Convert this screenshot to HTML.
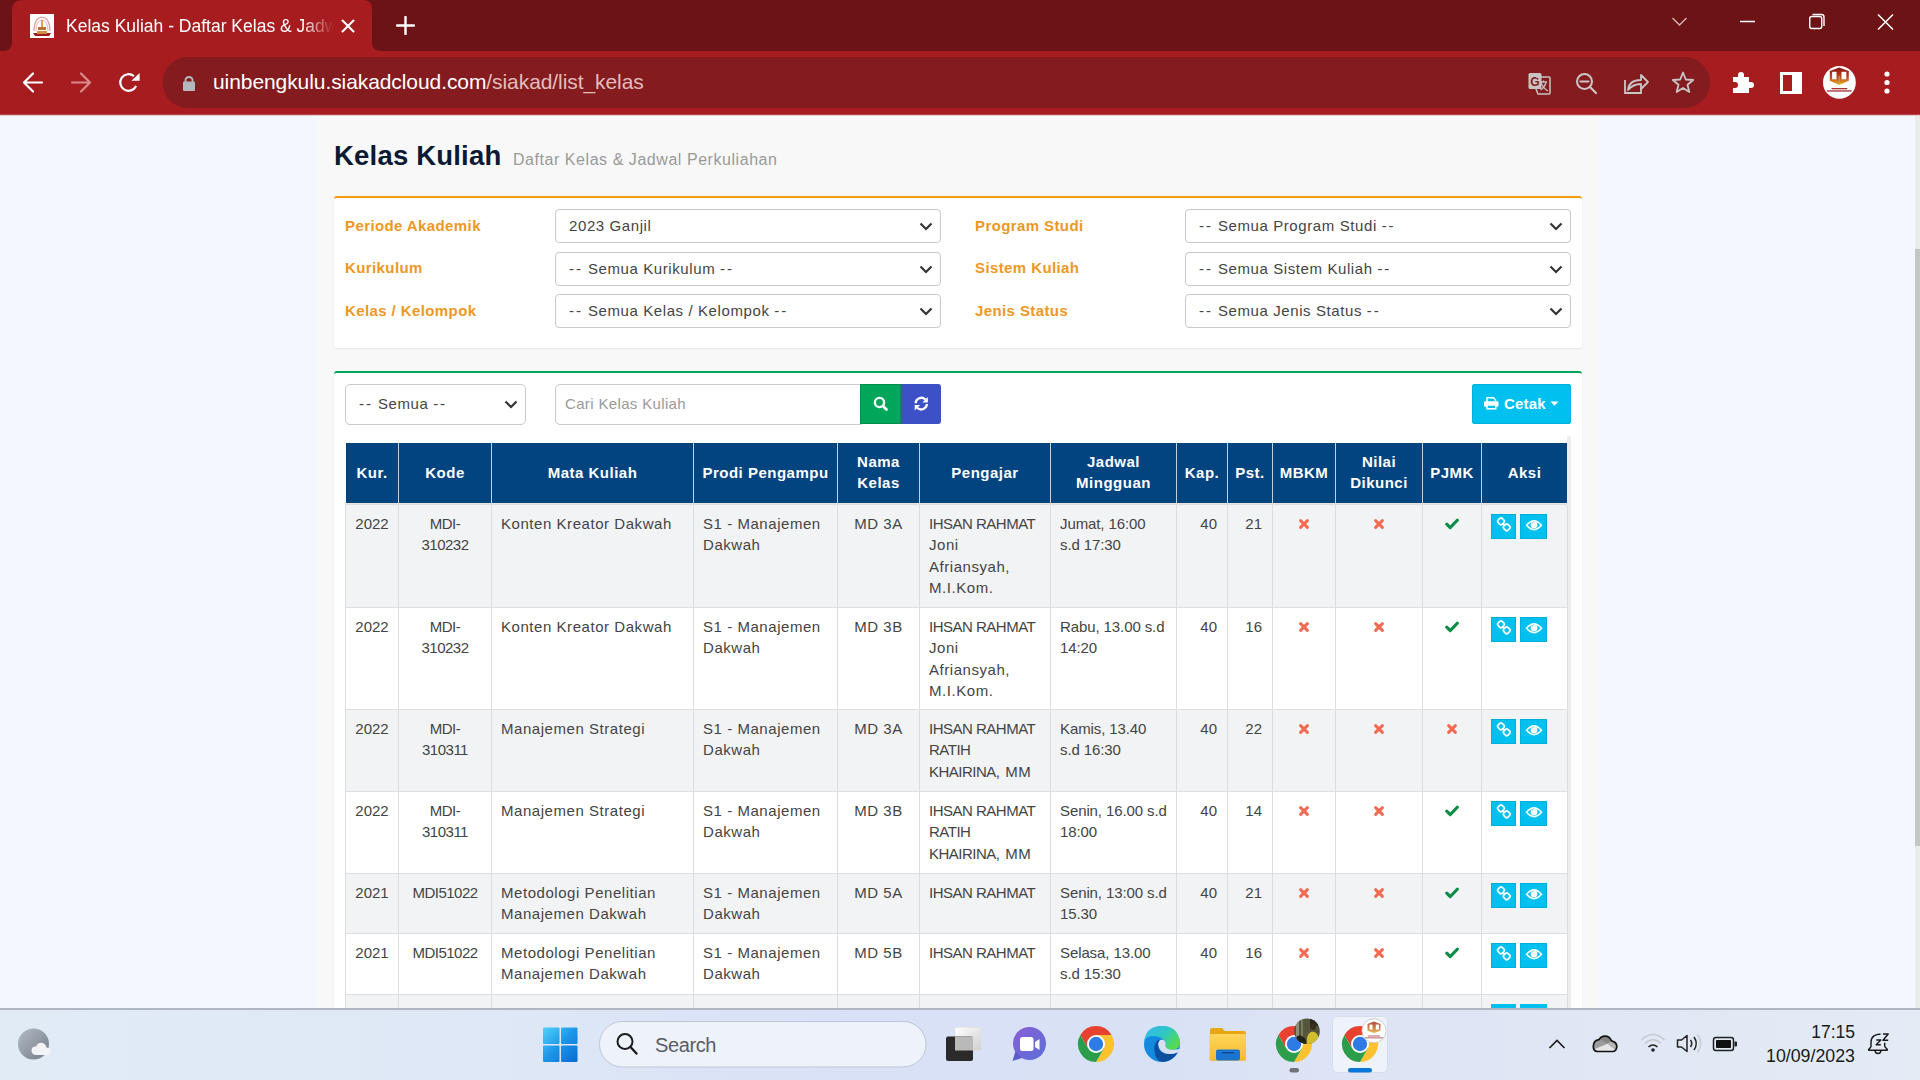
<!DOCTYPE html><html><head><meta charset="utf-8"><title>Kelas Kuliah</title><style>
*{margin:0;padding:0;box-sizing:border-box}
html,body{width:1920px;height:1080px;overflow:hidden;background:#f4f7fd;font-family:"Liberation Sans", sans-serif;}
.a{position:absolute}
.t{position:absolute;white-space:nowrap;line-height:1}
</style></head><body>
<svg class="a" style="left:0;top:0" width="1920" height="116" viewBox="0 0 1920 116"><rect x="0" y="0" width="1920" height="116" fill="#a61c1f"/><path d="M0 0 H12 V42 Q12 51 3 51 H0 Z" fill="#6c1315"/><path d="M0 0 H21 Q12 0 12 9 V0 Z" fill="#6c1315"/><path d="M363 0 Q372 0 372 9 V42 Q372 51 381 51 H1920 V0 Z" fill="#6c1315"/><rect x="12" y="0" width="10" height="10" fill="#6c1315"/><path d="M12 10 Q12 0 22 0 H30 V10 Z" fill="#a61c1f"/><rect x="162.5" y="57" width="1547.5" height="51" rx="25.5" fill="#841b1f"/><rect x="0" y="114" width="1920" height="1" fill="#b5484a"/><rect x="0" y="115" width="1920" height="1" fill="#e6c9ca"/></svg>
<div class="a" style="left:30px;top:14px;width:24px;height:24px;background:#fff"><svg width="24" height="24" viewBox="0 0 24 24"><path d="M4 17 Q4 4 12 3 Q20 4 20 17" fill="none" stroke="#d9a0a0" stroke-width="1.2"/><path d="M6 17 Q6 7 12 6 Q18 7 18 17" fill="none" stroke="#e3b5b5" stroke-width="1"/><rect x="11" y="6" width="2" height="9" fill="#e0a050"/><rect x="8" y="13" width="8" height="3" fill="#c07030"/><path d="M3 19 L21 19 L19 22 L5 22 Z" fill="#9a1a1a"/><rect x="7" y="17" width="10" height="3" fill="#d09040"/></svg></div>
<div class="t" style="left:66px;top:17.5px;font-size:17.5px;color:#fff;width:270px;overflow:hidden;-webkit-mask-image:linear-gradient(90deg,#000 235px,transparent 268px)">Kelas Kuliah - Daftar Kelas &amp; Jadwal Perkuliahan</div>
<svg class="a" style="left:340px;top:17.5px" width="16" height="16" viewBox="0 0 16 16"><path d="M2.5 2.5 L13.5 13.5 M13.5 2.5 L2.5 13.5" stroke="#fff" stroke-width="2.1" stroke-linecap="round"/></svg>
<svg class="a" style="left:396px;top:16px" width="19" height="19" viewBox="0 0 19 19"><path d="M9.5 1 V18 M1 9.5 H18" stroke="#fff" stroke-width="2.4" stroke-linecap="round"/></svg>
<svg class="a" style="left:1668px;top:10px" width="240" height="24" viewBox="0 0 240 24"><path d="M4.5 8 L11.5 15 L18.5 8" fill="none" stroke="#d9b9b9" stroke-width="1.3"/><path d="M72 11.5 H87" stroke="#fff" stroke-width="1.5"/><rect x="141.75" y="6.5" width="12" height="12" rx="2" fill="none" stroke="#fff" stroke-width="1.4"/><path d="M144.5 4.5 H153.5 Q156 4.5 156 7 V16" fill="none" stroke="#fff" stroke-width="1.4"/><path d="M210 4.5 L225 19.5 M225 4.5 L210 19.5" stroke="#fff" stroke-width="1.5"/></svg>
<svg class="a" style="left:0;top:60px" width="200" height="45" viewBox="0 0 200 45"><path d="M42 22.5 H25 M33 13.5 L24 22.5 L33 31.5" fill="none" stroke="#fff" stroke-width="2.2" stroke-linecap="round" stroke-linejoin="round"/><path d="M72 22.5 H89 M81 13.5 L90 22.5 L81 31.5" fill="none" stroke="#d98a8b" stroke-width="2.2" stroke-linecap="round" stroke-linejoin="round"/><path d="M136.1 26 A8.3 8.3 0 1 1 133.9 16.1" fill="none" stroke="#fff" stroke-width="2.2"/><path d="M139.6 13.1 L139.6 20.8 L131.4 20.8 Z" fill="#fff"/><path d="M185.5 22 V19.5 A3.7 3.7 0 0 1 192.5 19.5 V22" fill="none" stroke="#b5b9bd" stroke-width="1.8"/><rect x="183" y="21.5" width="12" height="9.5" rx="1.3" fill="#b5b9bd"/></svg>
<div class="t" style="left:213px;top:71px;font-size:21px;color:#fff;letter-spacing:-0.08px">uinbengkulu.siakadcloud.com<span style="color:#e3bdbd">/siakad/list_kelas</span></div>
<svg class="a" style="left:1520px;top:64px" width="400" height="40" viewBox="0 0 400 40"><rect x="8.5" y="9" width="13" height="16" rx="1.5" fill="#c9c3c3"/><text x="10.3" y="22" font-family="Liberation Sans" font-weight="bold" font-size="12" fill="#841b1f">G</text><path d="M16 13 H29 Q30 13 30 14 V29 Q30 30 29 30 H18 L16 25" fill="none" stroke="#c9c3c3" stroke-width="1.5"/><path d="M20 18 H27 M23.5 16.5 V18 M21 19 Q24 25 28 27 M26 19 Q24 24 20.5 26" fill="none" stroke="#c9c3c3" stroke-width="1.3"/><circle cx="64.5" cy="17.5" r="7.5" fill="none" stroke="#cbc6c6" stroke-width="2"/><path d="M60.5 17.5 H68.5 M70 23 L76 29" stroke="#cbc6c6" stroke-width="2.2" stroke-linecap="round"/><path d="M105 16 V29 H121 V24" fill="none" stroke="#cbc6c6" stroke-width="1.8"/><path d="M108 26 Q109 16 121 16 V11 L128 18 L121 25 V20 Q113 20 108 26 Z" fill="none" stroke="#cbc6c6" stroke-width="1.8" stroke-linejoin="round"/><path d="M163 8.5 L165.8 15.5 L173.2 16 L167.5 20.8 L169.3 28 L163 24 L156.7 28 L158.5 20.8 L152.8 16 L160.2 15.5 Z" fill="none" stroke="#cbc6c6" stroke-width="1.8" stroke-linejoin="round"/><path d="M213 13 H218 V11 A3 3 0 0 1 224 11 V13 H229 V18 H231 A3 3 0 0 1 231 24 H229 V29 H213 V24 H215 A3 3 0 0 0 215 18 H213 Z" fill="#fff"/><rect x="261.5" y="9.5" width="19" height="19" fill="none" stroke="#fff" stroke-width="3"/><rect x="272" y="9" width="9" height="20" fill="#fff"/><circle cx="367" cy="10" r="2.6" fill="#fff"/><circle cx="367" cy="18.5" r="2.6" fill="#fff"/><circle cx="367" cy="27" r="2.6" fill="#fff"/></svg>
<svg class="a" style="left:1823.2px;top:66.1px" width="33" height="33" viewBox="0 0 33 33"><defs><linearGradient id="pav" x1="0" y1="0" x2="0" y2="1"><stop offset="0" stop-color="#8a1212"/><stop offset="0.6" stop-color="#c2501e"/><stop offset="1" stop-color="#e8b420"/></linearGradient></defs><circle cx="16.4" cy="16.4" r="16.4" fill="#fff"/><path d="M16.2 1.4 L25.8 4.9 V14.7 L16.2 18.9 L6.8 14.7 V4.9 Z" fill="url(#pav)"/><rect x="9.1" y="5.8" width="4.4" height="7.5" fill="#fff"/><rect x="18.5" y="5.8" width="4.8" height="7.5" fill="#fff"/><rect x="15.8" y="10" width="0.9" height="7" fill="#9ab"/><rect x="8.5" y="22" width="15.8" height="1.3" fill="#a83030"/><rect x="3.8" y="24.3" width="24.8" height="1.3" fill="#a83030"/></svg>
<div class="a" style="left:317px;top:116px;width:1281.5px;height:892px;background:#f8f8f8"></div>
<div class="a" style="left:1915px;top:116px;width:5px;height:892px;background:#ebebeb"></div>
<div class="a" style="left:1915px;top:249px;width:5px;height:597px;background:#c6c6c6"></div>
<div class="t" style="left:334px;top:142px;font-size:27.5px;font-weight:bold;color:#0b1a33;letter-spacing:0.2px">Kelas Kuliah</div>
<div class="t" style="left:513px;top:152px;font-size:16px;color:#9a9a9a;letter-spacing:0.55px">Daftar Kelas &amp; Jadwal Perkuliahan</div>
<div class="a" style="left:334px;top:196px;width:1248px;height:152px;background:#fff;border-top:2px solid #f39c12;border-radius:3px;box-shadow:0 1px 2px rgba(0,0,0,0.08)"></div>
<div class="t" style="left:345px;top:217.8px;font-size:15px;font-weight:bold;color:#ee9824;letter-spacing:0.4px">Periode Akademik</div>
<div class="t" style="left:975px;top:217.8px;font-size:15px;font-weight:bold;color:#ee9824;letter-spacing:0.4px">Program Studi</div>
<div class="a" style="left:555px;top:209px;width:386px;height:34px;border:1px solid #c9c9c9;border-radius:4px;background:#fff"></div>
<div class="t" style="left:569px;top:217.5px;font-size:15px;color:#444;letter-spacing:0.6px">2023 Ganjil</div>
<svg class="a" style="left:919px;top:222px" width="14" height="9" viewBox="0 0 14 9"><path d="M1.5 1.5 L7 7 L12.5 1.5" fill="none" stroke="#333" stroke-width="2.2"/></svg>
<div class="a" style="left:1185px;top:209px;width:386px;height:34px;border:1px solid #c9c9c9;border-radius:4px;background:#fff"></div>
<div class="t" style="left:1199px;top:217.5px;font-size:15px;color:#444;letter-spacing:0.6px"><span style="letter-spacing:1.9px">-</span><span style="letter-spacing:1.4px">- </span>Semua Program Studi <span style="letter-spacing:1.9px">--</span></div>
<svg class="a" style="left:1549px;top:222px" width="14" height="9" viewBox="0 0 14 9"><path d="M1.5 1.5 L7 7 L12.5 1.5" fill="none" stroke="#333" stroke-width="2.2"/></svg>
<div class="t" style="left:345px;top:259.7px;font-size:15px;font-weight:bold;color:#ee9824;letter-spacing:0.4px">Kurikulum</div>
<div class="t" style="left:975px;top:259.7px;font-size:15px;font-weight:bold;color:#ee9824;letter-spacing:0.4px">Sistem Kuliah</div>
<div class="a" style="left:555px;top:252px;width:386px;height:34px;border:1px solid #c9c9c9;border-radius:4px;background:#fff"></div>
<div class="t" style="left:569px;top:260.5px;font-size:15px;color:#444;letter-spacing:0.6px"><span style="letter-spacing:1.9px">-</span><span style="letter-spacing:1.4px">- </span>Semua Kurikulum <span style="letter-spacing:1.9px">--</span></div>
<svg class="a" style="left:919px;top:265px" width="14" height="9" viewBox="0 0 14 9"><path d="M1.5 1.5 L7 7 L12.5 1.5" fill="none" stroke="#333" stroke-width="2.2"/></svg>
<div class="a" style="left:1185px;top:252px;width:386px;height:34px;border:1px solid #c9c9c9;border-radius:4px;background:#fff"></div>
<div class="t" style="left:1199px;top:260.5px;font-size:15px;color:#444;letter-spacing:0.6px"><span style="letter-spacing:1.9px">-</span><span style="letter-spacing:1.4px">- </span>Semua Sistem Kuliah <span style="letter-spacing:1.9px">--</span></div>
<svg class="a" style="left:1549px;top:265px" width="14" height="9" viewBox="0 0 14 9"><path d="M1.5 1.5 L7 7 L12.5 1.5" fill="none" stroke="#333" stroke-width="2.2"/></svg>
<div class="t" style="left:345px;top:302.6px;font-size:15px;font-weight:bold;color:#ee9824;letter-spacing:0.4px">Kelas / Kelompok</div>
<div class="t" style="left:975px;top:302.6px;font-size:15px;font-weight:bold;color:#ee9824;letter-spacing:0.4px">Jenis Status</div>
<div class="a" style="left:555px;top:294px;width:386px;height:34px;border:1px solid #c9c9c9;border-radius:4px;background:#fff"></div>
<div class="t" style="left:569px;top:302.5px;font-size:15px;color:#444;letter-spacing:0.6px"><span style="letter-spacing:1.9px">-</span><span style="letter-spacing:1.4px">- </span>Semua Kelas / Kelompok <span style="letter-spacing:1.9px">--</span></div>
<svg class="a" style="left:919px;top:307px" width="14" height="9" viewBox="0 0 14 9"><path d="M1.5 1.5 L7 7 L12.5 1.5" fill="none" stroke="#333" stroke-width="2.2"/></svg>
<div class="a" style="left:1185px;top:294px;width:386px;height:34px;border:1px solid #c9c9c9;border-radius:4px;background:#fff"></div>
<div class="t" style="left:1199px;top:302.5px;font-size:15px;color:#444;letter-spacing:0.6px"><span style="letter-spacing:1.9px">-</span><span style="letter-spacing:1.4px">- </span>Semua Jenis Status <span style="letter-spacing:1.9px">--</span></div>
<svg class="a" style="left:1549px;top:307px" width="14" height="9" viewBox="0 0 14 9"><path d="M1.5 1.5 L7 7 L12.5 1.5" fill="none" stroke="#333" stroke-width="2.2"/></svg>
<div class="a" style="left:334px;top:371px;width:1248px;height:700px;background:#fff;border-top:2px solid #00a65a;border-radius:3px;box-shadow:0 1px 2px rgba(0,0,0,0.08)"></div>
<div class="a" style="left:345px;top:384px;width:181px;height:41px;border:1px solid #c9c9c9;border-radius:5px;background:#fff"></div>
<div class="t" style="left:359px;top:396px;font-size:15px;color:#444;letter-spacing:0.6px"><span style="letter-spacing:1.9px">-</span><span style="letter-spacing:1.4px">- </span>Semua <span style="letter-spacing:1.9px">--</span></div>
<svg class="a" style="left:504px;top:400px" width="14" height="9" viewBox="0 0 14 9"><path d="M1.5 1.5 L7 7 L12.5 1.5" fill="none" stroke="#333" stroke-width="2.2"/></svg>
<div class="a" style="left:555px;top:384px;width:310px;height:41px;border:1px solid #c9c9c9;border-radius:5px;background:#fff"></div>
<div class="t" style="left:565px;top:396px;font-size:15px;color:#9a9a9a;letter-spacing:0.35px">Cari Kelas Kuliah</div>
<div class="a" style="left:860px;top:384px;width:41px;height:40px;background:#00a65a;box-shadow:inset 0 0 0 1px #008f4e"></div>
<div class="a" style="left:900.5px;top:384px;width:40.5px;height:40px;background:#3d51c6;border-radius:0 3px 3px 0"></div>
<svg class="a" style="left:872px;top:395px" width="18" height="18" viewBox="0 0 18 18"><circle cx="7.5" cy="7.5" r="4.6" fill="none" stroke="#fff" stroke-width="2.3"/><path d="M11 11 L14.5 14.5" stroke="#fff" stroke-width="2.8" stroke-linecap="round"/></svg>
<svg class="a" style="left:912px;top:395px" width="18" height="18" viewBox="0 0 18 18"><path d="M3.6 8.3 A5.7 5.7 0 0 1 13.3 4.5" fill="none" stroke="#fff" stroke-width="2.3"/><path d="M15.8 1.9 L15.8 7.4 L10.3 7.4 Z" fill="#fff"/><path d="M14.9 9 A5.7 5.7 0 0 1 5.2 12.8" fill="none" stroke="#fff" stroke-width="2.3"/><path d="M2.7 15.4 L2.7 9.9 L8.2 9.9 Z" fill="#fff"/></svg>
<div class="a" style="left:1472px;top:384px;width:99px;height:40px;background:#00c0ef;border-radius:3px;box-shadow:inset 0 0 0 1px #00b0dd"></div>
<svg class="a" style="left:1484px;top:397px" width="15" height="13" viewBox="0 0 15 13"><path d="M3 5 V0.8 H9.5 L11.5 2.8 V5" fill="none" stroke="#fff" stroke-width="1.5"/><rect x="0" y="4.3" width="14.5" height="5.4" rx="1.2" fill="#fff"/><rect x="3" y="8" width="8.8" height="3.8" fill="#00c0ef" stroke="#fff" stroke-width="1.5"/></svg>
<div class="t" style="left:1504px;top:395.5px;font-size:15px;font-weight:bold;color:#fff;letter-spacing:0.2px">Cetak</div>
<svg class="a" style="left:1550px;top:401px" width="9" height="6" viewBox="0 0 9 6"><path d="M0.5 0.5 H8.5 L4.5 4.8 Z" fill="#fff"/></svg>
<div class="a" style="left:346px;top:443px;width:1221px;height:60px;background:#02447f"></div>
<div class="a" style="left:345px;top:503px;width:1222px;height:1px;background:#ebe4df"></div>
<div class="a" style="left:345px;top:504px;width:1222px;height:1px;background:#dcdcdc"></div>
<div class="a" style="left:1567px;top:436px;width:4px;height:580px;background:#ededed;border-radius:2px"></div>
<div class="a" style="left:346px;top:505px;width:1221px;height:102px;background:#f2f3f5"></div>
<div class="a" style="left:346px;top:608px;width:1221px;height:101px;background:#ffffff"></div>
<div class="a" style="left:346px;top:710px;width:1221px;height:81px;background:#f2f3f5"></div>
<div class="a" style="left:346px;top:792px;width:1221px;height:81px;background:#ffffff"></div>
<div class="a" style="left:346px;top:874px;width:1221px;height:59px;background:#f2f3f5"></div>
<div class="a" style="left:346px;top:934px;width:1221px;height:60px;background:#ffffff"></div>
<div class="a" style="left:346px;top:995px;width:1221px;height:13px;background:#f2f3f5"></div>
<div class="a" style="left:345px;top:607px;width:1222px;height:1px;background:#dedede"></div>
<div class="a" style="left:345px;top:709px;width:1222px;height:1px;background:#dedede"></div>
<div class="a" style="left:345px;top:791px;width:1222px;height:1px;background:#dedede"></div>
<div class="a" style="left:345px;top:873px;width:1222px;height:1px;background:#dedede"></div>
<div class="a" style="left:345px;top:933px;width:1222px;height:1px;background:#dedede"></div>
<div class="a" style="left:345px;top:994px;width:1222px;height:1px;background:#dedede"></div>
<div class="a" style="left:345px;top:505px;width:1px;height:503px;background:#dedede"></div>
<div class="a" style="left:398px;top:443px;width:1px;height:60px;background:#c5cfdb"></div>
<div class="a" style="left:398px;top:503px;width:1px;height:505px;background:#dedede"></div>
<div class="a" style="left:491px;top:443px;width:1px;height:60px;background:#c5cfdb"></div>
<div class="a" style="left:491px;top:503px;width:1px;height:505px;background:#dedede"></div>
<div class="a" style="left:693px;top:443px;width:1px;height:60px;background:#c5cfdb"></div>
<div class="a" style="left:693px;top:503px;width:1px;height:505px;background:#dedede"></div>
<div class="a" style="left:837px;top:443px;width:1px;height:60px;background:#c5cfdb"></div>
<div class="a" style="left:837px;top:503px;width:1px;height:505px;background:#dedede"></div>
<div class="a" style="left:919px;top:443px;width:1px;height:60px;background:#c5cfdb"></div>
<div class="a" style="left:919px;top:503px;width:1px;height:505px;background:#dedede"></div>
<div class="a" style="left:1050px;top:443px;width:1px;height:60px;background:#c5cfdb"></div>
<div class="a" style="left:1050px;top:503px;width:1px;height:505px;background:#dedede"></div>
<div class="a" style="left:1176px;top:443px;width:1px;height:60px;background:#c5cfdb"></div>
<div class="a" style="left:1176px;top:503px;width:1px;height:505px;background:#dedede"></div>
<div class="a" style="left:1227px;top:443px;width:1px;height:60px;background:#c5cfdb"></div>
<div class="a" style="left:1227px;top:503px;width:1px;height:505px;background:#dedede"></div>
<div class="a" style="left:1272px;top:443px;width:1px;height:60px;background:#c5cfdb"></div>
<div class="a" style="left:1272px;top:503px;width:1px;height:505px;background:#dedede"></div>
<div class="a" style="left:1335px;top:443px;width:1px;height:60px;background:#c5cfdb"></div>
<div class="a" style="left:1335px;top:503px;width:1px;height:505px;background:#dedede"></div>
<div class="a" style="left:1422px;top:443px;width:1px;height:60px;background:#c5cfdb"></div>
<div class="a" style="left:1422px;top:503px;width:1px;height:505px;background:#dedede"></div>
<div class="a" style="left:1481px;top:443px;width:1px;height:60px;background:#c5cfdb"></div>
<div class="a" style="left:1481px;top:503px;width:1px;height:505px;background:#dedede"></div>
<div class="a" style="left:1567px;top:505px;width:1px;height:503px;background:#dedede"></div>
<div class="a" style="left:346px;top:462px;width:52px;text-align:center;font-size:15px;line-height:21px;font-weight:bold;color:#fff;white-space:nowrap;letter-spacing:0.5px">Kur.</div>
<div class="a" style="left:399px;top:462px;width:92px;text-align:center;font-size:15px;line-height:21px;font-weight:bold;color:#fff;white-space:nowrap;letter-spacing:0.5px">Kode</div>
<div class="a" style="left:492px;top:462px;width:201px;text-align:center;font-size:15px;line-height:21px;font-weight:bold;color:#fff;white-space:nowrap;letter-spacing:0.5px">Mata Kuliah</div>
<div class="a" style="left:694px;top:462px;width:143px;text-align:center;font-size:15px;line-height:21px;font-weight:bold;color:#fff;white-space:nowrap;letter-spacing:0.5px">Prodi Pengampu</div>
<div class="a" style="left:838px;top:450.5px;width:81px;text-align:center;font-size:15px;line-height:21px;font-weight:bold;color:#fff;white-space:nowrap;letter-spacing:0.5px">Nama<br>Kelas</div>
<div class="a" style="left:920px;top:462px;width:130px;text-align:center;font-size:15px;line-height:21px;font-weight:bold;color:#fff;white-space:nowrap;letter-spacing:0.5px">Pengajar</div>
<div class="a" style="left:1051px;top:450.5px;width:125px;text-align:center;font-size:15px;line-height:21px;font-weight:bold;color:#fff;white-space:nowrap;letter-spacing:0.5px">Jadwal<br>Mingguan</div>
<div class="a" style="left:1177px;top:462px;width:50px;text-align:center;font-size:15px;line-height:21px;font-weight:bold;color:#fff;white-space:nowrap;letter-spacing:0.5px">Kap.</div>
<div class="a" style="left:1228px;top:462px;width:44px;text-align:center;font-size:15px;line-height:21px;font-weight:bold;color:#fff;white-space:nowrap;letter-spacing:0.5px">Pst.</div>
<div class="a" style="left:1273px;top:462px;width:62px;text-align:center;font-size:15px;line-height:21px;font-weight:bold;color:#fff;white-space:nowrap;letter-spacing:0.5px">MBKM</div>
<div class="a" style="left:1336px;top:450.5px;width:86px;text-align:center;font-size:15px;line-height:21px;font-weight:bold;color:#fff;white-space:nowrap;letter-spacing:0.5px">Nilai<br>Dikunci</div>
<div class="a" style="left:1423px;top:462px;width:58px;text-align:center;font-size:15px;line-height:21px;font-weight:bold;color:#fff;white-space:nowrap;letter-spacing:0.5px">PJMK</div>
<div class="a" style="left:1482px;top:462px;width:85px;text-align:center;font-size:15px;line-height:21px;font-weight:bold;color:#fff;white-space:nowrap;letter-spacing:0.5px">Aksi</div>
<div class="a" style="left:346px;width:52px;text-align:center;top:513px;font-size:15px;line-height:21.4px;color:#444;white-space:nowrap;letter-spacing:0.0px">2022</div>
<div class="a" style="left:399px;width:92px;text-align:center;top:513px;font-size:15px;line-height:21.4px;color:#444;white-space:nowrap;letter-spacing:-0.5px">MDI-<br>310232</div>
<div class="a" style="left:501px;top:513px;font-size:15px;line-height:21.4px;color:#444;white-space:nowrap;letter-spacing:0.55px">Konten Kreator Dakwah</div>
<div class="a" style="left:703px;top:513px;font-size:15px;line-height:21.4px;color:#444;white-space:nowrap;letter-spacing:0.55px">S1 - Manajemen<br>Dakwah</div>
<div class="a" style="left:838px;width:81px;text-align:center;top:513px;font-size:15px;line-height:21.4px;color:#444;white-space:nowrap;letter-spacing:0.55px">MD 3A</div>
<div class="a" style="left:929px;top:513px;font-size:15px;line-height:21.4px;color:#444;white-space:nowrap;letter-spacing:0.55px"><span style="letter-spacing:-0.5px">IHSAN RAHMAT</span><br>Joni<br>Afriansyah,<br>M.I.Kom.</div>
<div class="a" style="left:1060px;top:513px;font-size:15px;line-height:21.4px;color:#444;white-space:nowrap;letter-spacing:-0.1px">Jumat, 16:00<br>s.d 17:30</div>
<div class="a" style="left:1177px;width:40px;text-align:right;top:513px;font-size:15px;line-height:21.4px;color:#444;white-space:nowrap;letter-spacing:0.0px">40</div>
<div class="a" style="left:1228px;width:34px;text-align:right;top:513px;font-size:15px;line-height:21.4px;color:#444;white-space:nowrap;letter-spacing:0.0px">21</div>
<div class="a" style="left:1298.0px;top:518px;width:12px;height:12px;line-height:0"><svg width="12" height="12" viewBox="0 0 12 12"><path d="M2.6 2.6 L9.4 9.4 M9.4 2.6 L2.6 9.4" stroke="#f36a53" stroke-width="3" stroke-linecap="round"/></svg></div>
<div class="a" style="left:1373.0px;top:518px;width:12px;height:12px;line-height:0"><svg width="12" height="12" viewBox="0 0 12 12"><path d="M2.6 2.6 L9.4 9.4 M9.4 2.6 L2.6 9.4" stroke="#f36a53" stroke-width="3" stroke-linecap="round"/></svg></div>
<div class="a" style="left:1445.0px;top:518px;width:14px;height:12px;line-height:0"><svg width="14" height="12" viewBox="0 0 14 12"><path d="M1.8 6.2 L5.2 9.6 L12.3 2.2" fill="none" stroke="#0b8c48" stroke-width="3.1" stroke-linejoin="round" stroke-linecap="round"/></svg></div>
<div class="a" style="left:1491px;top:514px;width:25px;height:25px;background:#00c0ef;box-shadow:inset 0 0 0 1px #00aedb;line-height:0"><svg width="25" height="25" viewBox="0 0 25 25"><g fill="none" stroke="#fff" stroke-width="1.7"><rect x="7.1" y="4.4" width="5.8" height="5.8" rx="1.9" transform="rotate(45 10 7.3)"/><rect x="12.8" y="10.4" width="5.8" height="5.8" rx="1.9" transform="rotate(45 15.7 13.3)"/><path d="M11.6 9.6 L14 11.2"/></g></svg></div>
<div class="a" style="left:1520px;top:514px;width:27px;height:25px;background:#00c0ef;box-shadow:inset 0 0 0 1px #00aedb;line-height:0"><svg width="27" height="25" viewBox="0 0 27 25"><path d="M6.6 11.3 Q14 2.5 21.4 11.3 Q14 20 6.6 11.3 Z" fill="none" stroke="#fff" stroke-width="1.6"/><circle cx="14" cy="10.9" r="3.4" fill="#fff"/><path d="M12 9.5 Q12.5 8.3 13.6 8" stroke="#00c0ef" stroke-width="0.8" fill="none"/></svg></div>
<div class="a" style="left:346px;width:52px;text-align:center;top:616px;font-size:15px;line-height:21.4px;color:#444;white-space:nowrap;letter-spacing:0.0px">2022</div>
<div class="a" style="left:399px;width:92px;text-align:center;top:616px;font-size:15px;line-height:21.4px;color:#444;white-space:nowrap;letter-spacing:-0.5px">MDI-<br>310232</div>
<div class="a" style="left:501px;top:616px;font-size:15px;line-height:21.4px;color:#444;white-space:nowrap;letter-spacing:0.55px">Konten Kreator Dakwah</div>
<div class="a" style="left:703px;top:616px;font-size:15px;line-height:21.4px;color:#444;white-space:nowrap;letter-spacing:0.55px">S1 - Manajemen<br>Dakwah</div>
<div class="a" style="left:838px;width:81px;text-align:center;top:616px;font-size:15px;line-height:21.4px;color:#444;white-space:nowrap;letter-spacing:0.55px">MD 3B</div>
<div class="a" style="left:929px;top:616px;font-size:15px;line-height:21.4px;color:#444;white-space:nowrap;letter-spacing:0.55px"><span style="letter-spacing:-0.5px">IHSAN RAHMAT</span><br>Joni<br>Afriansyah,<br>M.I.Kom.</div>
<div class="a" style="left:1060px;top:616px;font-size:15px;line-height:21.4px;color:#444;white-space:nowrap;letter-spacing:-0.1px">Rabu, 13.00 s.d<br>14:20</div>
<div class="a" style="left:1177px;width:40px;text-align:right;top:616px;font-size:15px;line-height:21.4px;color:#444;white-space:nowrap;letter-spacing:0.0px">40</div>
<div class="a" style="left:1228px;width:34px;text-align:right;top:616px;font-size:15px;line-height:21.4px;color:#444;white-space:nowrap;letter-spacing:0.0px">16</div>
<div class="a" style="left:1298.0px;top:621px;width:12px;height:12px;line-height:0"><svg width="12" height="12" viewBox="0 0 12 12"><path d="M2.6 2.6 L9.4 9.4 M9.4 2.6 L2.6 9.4" stroke="#f36a53" stroke-width="3" stroke-linecap="round"/></svg></div>
<div class="a" style="left:1373.0px;top:621px;width:12px;height:12px;line-height:0"><svg width="12" height="12" viewBox="0 0 12 12"><path d="M2.6 2.6 L9.4 9.4 M9.4 2.6 L2.6 9.4" stroke="#f36a53" stroke-width="3" stroke-linecap="round"/></svg></div>
<div class="a" style="left:1445.0px;top:621px;width:14px;height:12px;line-height:0"><svg width="14" height="12" viewBox="0 0 14 12"><path d="M1.8 6.2 L5.2 9.6 L12.3 2.2" fill="none" stroke="#0b8c48" stroke-width="3.1" stroke-linejoin="round" stroke-linecap="round"/></svg></div>
<div class="a" style="left:1491px;top:617px;width:25px;height:25px;background:#00c0ef;box-shadow:inset 0 0 0 1px #00aedb;line-height:0"><svg width="25" height="25" viewBox="0 0 25 25"><g fill="none" stroke="#fff" stroke-width="1.7"><rect x="7.1" y="4.4" width="5.8" height="5.8" rx="1.9" transform="rotate(45 10 7.3)"/><rect x="12.8" y="10.4" width="5.8" height="5.8" rx="1.9" transform="rotate(45 15.7 13.3)"/><path d="M11.6 9.6 L14 11.2"/></g></svg></div>
<div class="a" style="left:1520px;top:617px;width:27px;height:25px;background:#00c0ef;box-shadow:inset 0 0 0 1px #00aedb;line-height:0"><svg width="27" height="25" viewBox="0 0 27 25"><path d="M6.6 11.3 Q14 2.5 21.4 11.3 Q14 20 6.6 11.3 Z" fill="none" stroke="#fff" stroke-width="1.6"/><circle cx="14" cy="10.9" r="3.4" fill="#fff"/><path d="M12 9.5 Q12.5 8.3 13.6 8" stroke="#00c0ef" stroke-width="0.8" fill="none"/></svg></div>
<div class="a" style="left:346px;width:52px;text-align:center;top:718px;font-size:15px;line-height:21.4px;color:#444;white-space:nowrap;letter-spacing:0.0px">2022</div>
<div class="a" style="left:399px;width:92px;text-align:center;top:718px;font-size:15px;line-height:21.4px;color:#444;white-space:nowrap;letter-spacing:-0.5px">MDI-<br>310311</div>
<div class="a" style="left:501px;top:718px;font-size:15px;line-height:21.4px;color:#444;white-space:nowrap;letter-spacing:0.55px">Manajemen Strategi</div>
<div class="a" style="left:703px;top:718px;font-size:15px;line-height:21.4px;color:#444;white-space:nowrap;letter-spacing:0.55px">S1 - Manajemen<br>Dakwah</div>
<div class="a" style="left:838px;width:81px;text-align:center;top:718px;font-size:15px;line-height:21.4px;color:#444;white-space:nowrap;letter-spacing:0.55px">MD 3A</div>
<div class="a" style="left:929px;top:718px;font-size:15px;line-height:21.4px;color:#444;white-space:nowrap;letter-spacing:0.55px"><span style="letter-spacing:-0.5px">IHSAN RAHMAT</span><br><span style="letter-spacing:-0.5px">RATIH</span><br><span style="letter-spacing:-0.5px">KHAIRINA</span>, MM</div>
<div class="a" style="left:1060px;top:718px;font-size:15px;line-height:21.4px;color:#444;white-space:nowrap;letter-spacing:-0.1px">Kamis, 13.40<br>s.d 16:30</div>
<div class="a" style="left:1177px;width:40px;text-align:right;top:718px;font-size:15px;line-height:21.4px;color:#444;white-space:nowrap;letter-spacing:0.0px">40</div>
<div class="a" style="left:1228px;width:34px;text-align:right;top:718px;font-size:15px;line-height:21.4px;color:#444;white-space:nowrap;letter-spacing:0.0px">22</div>
<div class="a" style="left:1298.0px;top:723px;width:12px;height:12px;line-height:0"><svg width="12" height="12" viewBox="0 0 12 12"><path d="M2.6 2.6 L9.4 9.4 M9.4 2.6 L2.6 9.4" stroke="#f36a53" stroke-width="3" stroke-linecap="round"/></svg></div>
<div class="a" style="left:1373.0px;top:723px;width:12px;height:12px;line-height:0"><svg width="12" height="12" viewBox="0 0 12 12"><path d="M2.6 2.6 L9.4 9.4 M9.4 2.6 L2.6 9.4" stroke="#f36a53" stroke-width="3" stroke-linecap="round"/></svg></div>
<div class="a" style="left:1446.0px;top:723px;width:12px;height:12px;line-height:0"><svg width="12" height="12" viewBox="0 0 12 12"><path d="M2.6 2.6 L9.4 9.4 M9.4 2.6 L2.6 9.4" stroke="#f36a53" stroke-width="3" stroke-linecap="round"/></svg></div>
<div class="a" style="left:1491px;top:719px;width:25px;height:25px;background:#00c0ef;box-shadow:inset 0 0 0 1px #00aedb;line-height:0"><svg width="25" height="25" viewBox="0 0 25 25"><g fill="none" stroke="#fff" stroke-width="1.7"><rect x="7.1" y="4.4" width="5.8" height="5.8" rx="1.9" transform="rotate(45 10 7.3)"/><rect x="12.8" y="10.4" width="5.8" height="5.8" rx="1.9" transform="rotate(45 15.7 13.3)"/><path d="M11.6 9.6 L14 11.2"/></g></svg></div>
<div class="a" style="left:1520px;top:719px;width:27px;height:25px;background:#00c0ef;box-shadow:inset 0 0 0 1px #00aedb;line-height:0"><svg width="27" height="25" viewBox="0 0 27 25"><path d="M6.6 11.3 Q14 2.5 21.4 11.3 Q14 20 6.6 11.3 Z" fill="none" stroke="#fff" stroke-width="1.6"/><circle cx="14" cy="10.9" r="3.4" fill="#fff"/><path d="M12 9.5 Q12.5 8.3 13.6 8" stroke="#00c0ef" stroke-width="0.8" fill="none"/></svg></div>
<div class="a" style="left:346px;width:52px;text-align:center;top:800px;font-size:15px;line-height:21.4px;color:#444;white-space:nowrap;letter-spacing:0.0px">2022</div>
<div class="a" style="left:399px;width:92px;text-align:center;top:800px;font-size:15px;line-height:21.4px;color:#444;white-space:nowrap;letter-spacing:-0.5px">MDI-<br>310311</div>
<div class="a" style="left:501px;top:800px;font-size:15px;line-height:21.4px;color:#444;white-space:nowrap;letter-spacing:0.55px">Manajemen Strategi</div>
<div class="a" style="left:703px;top:800px;font-size:15px;line-height:21.4px;color:#444;white-space:nowrap;letter-spacing:0.55px">S1 - Manajemen<br>Dakwah</div>
<div class="a" style="left:838px;width:81px;text-align:center;top:800px;font-size:15px;line-height:21.4px;color:#444;white-space:nowrap;letter-spacing:0.55px">MD 3B</div>
<div class="a" style="left:929px;top:800px;font-size:15px;line-height:21.4px;color:#444;white-space:nowrap;letter-spacing:0.55px"><span style="letter-spacing:-0.5px">IHSAN RAHMAT</span><br><span style="letter-spacing:-0.5px">RATIH</span><br><span style="letter-spacing:-0.5px">KHAIRINA</span>, MM</div>
<div class="a" style="left:1060px;top:800px;font-size:15px;line-height:21.4px;color:#444;white-space:nowrap;letter-spacing:-0.1px">Senin, 16.00 s.d<br>18:00</div>
<div class="a" style="left:1177px;width:40px;text-align:right;top:800px;font-size:15px;line-height:21.4px;color:#444;white-space:nowrap;letter-spacing:0.0px">40</div>
<div class="a" style="left:1228px;width:34px;text-align:right;top:800px;font-size:15px;line-height:21.4px;color:#444;white-space:nowrap;letter-spacing:0.0px">14</div>
<div class="a" style="left:1298.0px;top:805px;width:12px;height:12px;line-height:0"><svg width="12" height="12" viewBox="0 0 12 12"><path d="M2.6 2.6 L9.4 9.4 M9.4 2.6 L2.6 9.4" stroke="#f36a53" stroke-width="3" stroke-linecap="round"/></svg></div>
<div class="a" style="left:1373.0px;top:805px;width:12px;height:12px;line-height:0"><svg width="12" height="12" viewBox="0 0 12 12"><path d="M2.6 2.6 L9.4 9.4 M9.4 2.6 L2.6 9.4" stroke="#f36a53" stroke-width="3" stroke-linecap="round"/></svg></div>
<div class="a" style="left:1445.0px;top:805px;width:14px;height:12px;line-height:0"><svg width="14" height="12" viewBox="0 0 14 12"><path d="M1.8 6.2 L5.2 9.6 L12.3 2.2" fill="none" stroke="#0b8c48" stroke-width="3.1" stroke-linejoin="round" stroke-linecap="round"/></svg></div>
<div class="a" style="left:1491px;top:801px;width:25px;height:25px;background:#00c0ef;box-shadow:inset 0 0 0 1px #00aedb;line-height:0"><svg width="25" height="25" viewBox="0 0 25 25"><g fill="none" stroke="#fff" stroke-width="1.7"><rect x="7.1" y="4.4" width="5.8" height="5.8" rx="1.9" transform="rotate(45 10 7.3)"/><rect x="12.8" y="10.4" width="5.8" height="5.8" rx="1.9" transform="rotate(45 15.7 13.3)"/><path d="M11.6 9.6 L14 11.2"/></g></svg></div>
<div class="a" style="left:1520px;top:801px;width:27px;height:25px;background:#00c0ef;box-shadow:inset 0 0 0 1px #00aedb;line-height:0"><svg width="27" height="25" viewBox="0 0 27 25"><path d="M6.6 11.3 Q14 2.5 21.4 11.3 Q14 20 6.6 11.3 Z" fill="none" stroke="#fff" stroke-width="1.6"/><circle cx="14" cy="10.9" r="3.4" fill="#fff"/><path d="M12 9.5 Q12.5 8.3 13.6 8" stroke="#00c0ef" stroke-width="0.8" fill="none"/></svg></div>
<div class="a" style="left:346px;width:52px;text-align:center;top:882px;font-size:15px;line-height:21.4px;color:#444;white-space:nowrap;letter-spacing:0.0px">2021</div>
<div class="a" style="left:399px;width:92px;text-align:center;top:882px;font-size:15px;line-height:21.4px;color:#444;white-space:nowrap;letter-spacing:-0.5px">MDI51022</div>
<div class="a" style="left:501px;top:882px;font-size:15px;line-height:21.4px;color:#444;white-space:nowrap;letter-spacing:0.55px">Metodologi Penelitian<br>Manajemen Dakwah</div>
<div class="a" style="left:703px;top:882px;font-size:15px;line-height:21.4px;color:#444;white-space:nowrap;letter-spacing:0.55px">S1 - Manajemen<br>Dakwah</div>
<div class="a" style="left:838px;width:81px;text-align:center;top:882px;font-size:15px;line-height:21.4px;color:#444;white-space:nowrap;letter-spacing:0.55px">MD 5A</div>
<div class="a" style="left:929px;top:882px;font-size:15px;line-height:21.4px;color:#444;white-space:nowrap;letter-spacing:0.55px"><span style="letter-spacing:-0.5px">IHSAN RAHMAT</span></div>
<div class="a" style="left:1060px;top:882px;font-size:15px;line-height:21.4px;color:#444;white-space:nowrap;letter-spacing:-0.1px">Senin, 13:00 s.d<br>15.30</div>
<div class="a" style="left:1177px;width:40px;text-align:right;top:882px;font-size:15px;line-height:21.4px;color:#444;white-space:nowrap;letter-spacing:0.0px">40</div>
<div class="a" style="left:1228px;width:34px;text-align:right;top:882px;font-size:15px;line-height:21.4px;color:#444;white-space:nowrap;letter-spacing:0.0px">21</div>
<div class="a" style="left:1298.0px;top:887px;width:12px;height:12px;line-height:0"><svg width="12" height="12" viewBox="0 0 12 12"><path d="M2.6 2.6 L9.4 9.4 M9.4 2.6 L2.6 9.4" stroke="#f36a53" stroke-width="3" stroke-linecap="round"/></svg></div>
<div class="a" style="left:1373.0px;top:887px;width:12px;height:12px;line-height:0"><svg width="12" height="12" viewBox="0 0 12 12"><path d="M2.6 2.6 L9.4 9.4 M9.4 2.6 L2.6 9.4" stroke="#f36a53" stroke-width="3" stroke-linecap="round"/></svg></div>
<div class="a" style="left:1445.0px;top:887px;width:14px;height:12px;line-height:0"><svg width="14" height="12" viewBox="0 0 14 12"><path d="M1.8 6.2 L5.2 9.6 L12.3 2.2" fill="none" stroke="#0b8c48" stroke-width="3.1" stroke-linejoin="round" stroke-linecap="round"/></svg></div>
<div class="a" style="left:1491px;top:883px;width:25px;height:25px;background:#00c0ef;box-shadow:inset 0 0 0 1px #00aedb;line-height:0"><svg width="25" height="25" viewBox="0 0 25 25"><g fill="none" stroke="#fff" stroke-width="1.7"><rect x="7.1" y="4.4" width="5.8" height="5.8" rx="1.9" transform="rotate(45 10 7.3)"/><rect x="12.8" y="10.4" width="5.8" height="5.8" rx="1.9" transform="rotate(45 15.7 13.3)"/><path d="M11.6 9.6 L14 11.2"/></g></svg></div>
<div class="a" style="left:1520px;top:883px;width:27px;height:25px;background:#00c0ef;box-shadow:inset 0 0 0 1px #00aedb;line-height:0"><svg width="27" height="25" viewBox="0 0 27 25"><path d="M6.6 11.3 Q14 2.5 21.4 11.3 Q14 20 6.6 11.3 Z" fill="none" stroke="#fff" stroke-width="1.6"/><circle cx="14" cy="10.9" r="3.4" fill="#fff"/><path d="M12 9.5 Q12.5 8.3 13.6 8" stroke="#00c0ef" stroke-width="0.8" fill="none"/></svg></div>
<div class="a" style="left:346px;width:52px;text-align:center;top:942px;font-size:15px;line-height:21.4px;color:#444;white-space:nowrap;letter-spacing:0.0px">2021</div>
<div class="a" style="left:399px;width:92px;text-align:center;top:942px;font-size:15px;line-height:21.4px;color:#444;white-space:nowrap;letter-spacing:-0.5px">MDI51022</div>
<div class="a" style="left:501px;top:942px;font-size:15px;line-height:21.4px;color:#444;white-space:nowrap;letter-spacing:0.55px">Metodologi Penelitian<br>Manajemen Dakwah</div>
<div class="a" style="left:703px;top:942px;font-size:15px;line-height:21.4px;color:#444;white-space:nowrap;letter-spacing:0.55px">S1 - Manajemen<br>Dakwah</div>
<div class="a" style="left:838px;width:81px;text-align:center;top:942px;font-size:15px;line-height:21.4px;color:#444;white-space:nowrap;letter-spacing:0.55px">MD 5B</div>
<div class="a" style="left:929px;top:942px;font-size:15px;line-height:21.4px;color:#444;white-space:nowrap;letter-spacing:0.55px"><span style="letter-spacing:-0.5px">IHSAN RAHMAT</span></div>
<div class="a" style="left:1060px;top:942px;font-size:15px;line-height:21.4px;color:#444;white-space:nowrap;letter-spacing:-0.1px">Selasa, 13.00<br>s.d 15:30</div>
<div class="a" style="left:1177px;width:40px;text-align:right;top:942px;font-size:15px;line-height:21.4px;color:#444;white-space:nowrap;letter-spacing:0.0px">40</div>
<div class="a" style="left:1228px;width:34px;text-align:right;top:942px;font-size:15px;line-height:21.4px;color:#444;white-space:nowrap;letter-spacing:0.0px">16</div>
<div class="a" style="left:1298.0px;top:947px;width:12px;height:12px;line-height:0"><svg width="12" height="12" viewBox="0 0 12 12"><path d="M2.6 2.6 L9.4 9.4 M9.4 2.6 L2.6 9.4" stroke="#f36a53" stroke-width="3" stroke-linecap="round"/></svg></div>
<div class="a" style="left:1373.0px;top:947px;width:12px;height:12px;line-height:0"><svg width="12" height="12" viewBox="0 0 12 12"><path d="M2.6 2.6 L9.4 9.4 M9.4 2.6 L2.6 9.4" stroke="#f36a53" stroke-width="3" stroke-linecap="round"/></svg></div>
<div class="a" style="left:1445.0px;top:947px;width:14px;height:12px;line-height:0"><svg width="14" height="12" viewBox="0 0 14 12"><path d="M1.8 6.2 L5.2 9.6 L12.3 2.2" fill="none" stroke="#0b8c48" stroke-width="3.1" stroke-linejoin="round" stroke-linecap="round"/></svg></div>
<div class="a" style="left:1491px;top:943px;width:25px;height:25px;background:#00c0ef;box-shadow:inset 0 0 0 1px #00aedb;line-height:0"><svg width="25" height="25" viewBox="0 0 25 25"><g fill="none" stroke="#fff" stroke-width="1.7"><rect x="7.1" y="4.4" width="5.8" height="5.8" rx="1.9" transform="rotate(45 10 7.3)"/><rect x="12.8" y="10.4" width="5.8" height="5.8" rx="1.9" transform="rotate(45 15.7 13.3)"/><path d="M11.6 9.6 L14 11.2"/></g></svg></div>
<div class="a" style="left:1520px;top:943px;width:27px;height:25px;background:#00c0ef;box-shadow:inset 0 0 0 1px #00aedb;line-height:0"><svg width="27" height="25" viewBox="0 0 27 25"><path d="M6.6 11.3 Q14 2.5 21.4 11.3 Q14 20 6.6 11.3 Z" fill="none" stroke="#fff" stroke-width="1.6"/><circle cx="14" cy="10.9" r="3.4" fill="#fff"/><path d="M12 9.5 Q12.5 8.3 13.6 8" stroke="#00c0ef" stroke-width="0.8" fill="none"/></svg></div>
<div class="a" style="left:1491px;top:1004px;width:25px;height:4px;background:#00c0ef"></div>
<div class="a" style="left:1520px;top:1004px;width:27px;height:4px;background:#00c0ef"></div>
<div class="a" style="left:0;top:1008px;width:1920px;height:72px;background:linear-gradient(90deg,#e1ebf6 0%,#dfe8f6 25%,#d8e1f6 45%,#d9e1f5 60%,#dfe7f5 80%,#e3ebf5 100%);border-top:2px solid #b0b7c2"></div>
<svg class="a" style="left:0;top:1008px" width="1920" height="72" viewBox="0 1008 1920 72"><defs><linearGradient id="moon" x1="0" y1="0" x2="1" y2="1"><stop offset="0" stop-color="#b4bcc6"/><stop offset="1" stop-color="#737b86"/></linearGradient><linearGradient id="win" gradientUnits="userSpaceOnUse" x1="543" y1="1027" x2="577" y2="1062"><stop offset="0" stop-color="#52d4fa"/><stop offset="0.5" stop-color="#1c96e8"/><stop offset="1" stop-color="#0a6ad2"/></linearGradient><linearGradient id="meet" x1="0" y1="0" x2="1" y2="1"><stop offset="0" stop-color="#8a5ed6"/><stop offset="1" stop-color="#5a6fd8"/></linearGradient><linearGradient id="edge" x1="0" y1="0" x2="1" y2="1"><stop offset="0" stop-color="#34b4e8"/><stop offset="0.6" stop-color="#1c7fd4"/><stop offset="1" stop-color="#5fd35a"/></linearGradient><linearGradient id="fold" x1="0" y1="0" x2="0" y2="1"><stop offset="0" stop-color="#ffd659"/><stop offset="1" stop-color="#f5b932"/></linearGradient><linearGradient id="tv" x1="0" y1="0" x2="1" y2="1"><stop offset="0" stop-color="#ffffff"/><stop offset="1" stop-color="#cfcfcf"/></linearGradient><clipPath id="pill"><rect x="599.5" y="1021" width="326.5" height="46" rx="23"/></clipPath><linearGradient id="edge2" x1="0" y1="0" x2="1" y2="0.6"><stop offset="0" stop-color="#37b9f0"/><stop offset="0.55" stop-color="#2fc7c6"/><stop offset="1" stop-color="#56db4c"/></linearGradient><linearGradient id="pav2" x1="0" y1="0" x2="0" y2="1"><stop offset="0" stop-color="#a82a20"/><stop offset="0.7" stop-color="#d08030"/><stop offset="1" stop-color="#e8c040"/></linearGradient></defs><circle cx="33.5" cy="1044" r="15.5" fill="url(#moon)"/><path d="M37 1055 Q31 1055 31.5 1050 Q32 1046 36 1046.5 Q38 1042 42.5 1043 Q46 1044 46.5 1047.5 Q51 1048 51 1051.5 Q50.5 1055 47 1055 Z" fill="#f2f3f5"/><rect x="543" y="1027.5" width="16.5" height="16.5" rx="1" fill="url(#win)"/><rect x="561" y="1027.5" width="16.5" height="16.5" rx="1" fill="url(#win)"/><rect x="543" y="1045.5" width="16.5" height="16.5" rx="1" fill="url(#win)"/><rect x="561" y="1045.5" width="16.5" height="16.5" rx="1" fill="url(#win)"/><rect x="599.5" y="1021.5" width="326.5" height="45.5" rx="22.75" fill="#eef2fb" stroke="#bfc7d6" stroke-width="1"/><circle cx="625" cy="1041.5" r="7.5" fill="none" stroke="#1c1c1c" stroke-width="2"/><path d="M630.5 1047 L636.5 1053.5" stroke="#1c1c1c" stroke-width="2.4" stroke-linecap="round"/><rect x="955" y="1027.5" width="26" height="23" rx="1.5" fill="url(#tv)" stroke="#e0e0e0" stroke-width="0.5"/><rect x="946" y="1036.5" width="27" height="24.5" rx="2" fill="#2a2a2a"/><rect x="955" y="1036.5" width="18" height="14" fill="#b9b9b9"/><circle cx="1029.5" cy="1043.5" r="16.5" fill="url(#meet)"/><path d="M1012.5 1061 L1015.5 1051 L1022 1058 Z" fill="#5a5ccc"/><rect x="1020" y="1037" width="13.5" height="14" rx="2.5" fill="#fff"/><path d="M1035 1042 L1039.5 1039 V1050 L1035 1047 Z" fill="#fff"/><g transform="translate(1096 1044)"><path d="M-15.59 -9 A18 18 0 0 1 15.59 -9 L0 -9 L0 0 L-7.79 4.5 Z" fill="#e8412f"/><path d="M15.59 -9 A18 18 0 0 1 0 18 L7.79 4.5 L0 0 L0 -9 Z" fill="#fcc230"/><path d="M0 18 A18 18 0 0 1 -15.59 -9 L-7.79 4.5 L0 0 L7.79 4.5 Z" fill="#2c9e4b"/><circle r="9" fill="#fff"/><circle r="7.2" fill="#2f7be6"/></g><g transform="translate(1138 1020)"><circle cx="24" cy="24" r="18" fill="#118adf"/><path d="M6.2 21 Q8 6 24 6 Q40 6 42 22 Q42.5 29 35 29.8 Q28 30 27.3 26.5 Q28.5 22 25 19 Q19 14.5 11 16.5 Q7.5 18 6.2 21 Z" fill="url(#edge2)"/><path d="M16.3 30 Q16 20 22.5 19.5 Q19.5 22 20.3 27 Q22 33.5 30 34 Q36 34.3 39.5 32.5 Q35 41 25 42 Q17 41 16.3 30 Z" fill="#0d4f9f"/><path d="M20.2 24 Q21 19 25 19.8 Q28.5 21.5 27.4 26 Q28 30 35 29.8 L43 29 L43 33 L39.5 32.5 Q35 34.3 30 34 Q21 33 20.2 24 Z" fill="#d9e0f4"/></g><path d="M1210 1030 Q1210 1028 1212 1028 H1222 L1225 1031 H1244 Q1246 1031 1246 1033 V1059 Q1246 1060.5 1244 1060.5 H1212 Q1210 1060.5 1210 1059 Z" fill="#e8a710"/><rect x="1209.5" y="1034" width="36.5" height="26.5" rx="1.5" fill="url(#fold)"/><rect x="1216" y="1049.5" width="24" height="11" rx="2" fill="#1b75d0"/><rect x="1222" y="1052" width="12" height="1.6" fill="#0d4f9e"/><g transform="translate(1294 1044)"><path d="M-15.59 -9 A18 18 0 0 1 15.59 -9 L0 -9 L0 0 L-7.79 4.5 Z" fill="#e8412f"/><path d="M15.59 -9 A18 18 0 0 1 0 18 L7.79 4.5 L0 0 L0 -9 Z" fill="#fcc230"/><path d="M0 18 A18 18 0 0 1 -15.59 -9 L-7.79 4.5 L0 0 L7.79 4.5 Z" fill="#2c9e4b"/><circle r="9" fill="#fff"/><circle r="7.2" fill="#2f7be6"/></g><clipPath id="b1"><circle cx="1307" cy="1031.3" r="12.8"/></clipPath><g clip-path="url(#b1)"><rect x="1294" y="1018" width="26" height="26" fill="#55553d"/><rect x="1296" y="1018" width="3" height="26" fill="#8d8f78"/><rect x="1301" y="1018" width="2" height="26" fill="#7a7c62"/><rect x="1310" y="1018" width="8" height="8" fill="#2a2a1c"/><path d="M1307 1044 Q1306 1034 1311 1032 Q1316 1031 1318 1036 L1320 1044 Z" fill="#d2bd2c"/><path d="M1297 1036 Q1302 1034 1306 1040 L1306 1044 H1294 Z" fill="#23231a"/><circle cx="1313" cy="1027" r="3" fill="#3a3020"/></g><rect x="1289.5" y="1068" width="9.5" height="4.5" rx="2.25" fill="#6f7277"/><rect x="1332.5" y="1016.5" width="55" height="56" rx="5" fill="#eef2fa" stroke="#d3d9e6" stroke-width="0.8"/><g transform="translate(1360 1044)"><path d="M-15.59 -9 A18 18 0 0 1 15.59 -9 L0 -9 L0 0 L-7.79 4.5 Z" fill="#e8412f"/><path d="M15.59 -9 A18 18 0 0 1 0 18 L7.79 4.5 L0 0 L0 -9 Z" fill="#fcc230"/><path d="M0 18 A18 18 0 0 1 -15.59 -9 L-7.79 4.5 L0 0 L7.79 4.5 Z" fill="#2c9e4b"/><circle r="9" fill="#fff"/><circle r="7.2" fill="#2f7be6"/></g><circle cx="1374" cy="1030.7" r="12" fill="#fff" stroke="#c8c8c8" stroke-width="0.9"/><path d="M1374 1021.5 L1380.5 1024 V1030.5 L1374 1033.3 L1367.5 1030.5 V1024 Z" fill="url(#pav2)" opacity="0.85"/><rect x="1369.5" y="1024.6" width="3" height="5" fill="#fff"/><rect x="1375.8" y="1024.6" width="3.2" height="5" fill="#fff"/><rect x="1368" y="1035.5" width="12" height="1" fill="#c06060"/><rect x="1365" y="1037.3" width="18" height="1.1" fill="#c07070"/><rect x="1348" y="1068" width="24" height="4.5" rx="2.25" fill="#0a78d6"/><path d="M1549.5 1048 L1557 1040.5 L1564.5 1048" fill="none" stroke="#1a1a1a" stroke-width="1.6"/><g transform="translate(1585 1028)"><clipPath id="odc"><path d="M12.5 23.5 Q8.3 23.3 8.3 18.5 Q8.5 12 14 11.6 Q16 8.2 20 8.2 Q24.5 8.2 26.5 12.8 Q31.8 14 31.8 18.5 Q31.5 23.5 27.5 23.5 Z"/></clipPath><g clip-path="url(#odc)"><rect x="7" y="7" width="26" height="18" fill="#9c9c9c"/><path d="M13 10 Q20 6 27 12.5 L22.5 15.8 L16 11.8 Z" fill="#868686"/><path d="M22.5 15.8 L27 12.5 L33 14 V22 L30 21.5 Z" fill="#b4b4b4"/><path d="M8 21.8 L22.5 15.8 L31 22.5 V25 H8 Z" fill="#e6e6e6"/></g><path d="M12.5 23.5 Q8.3 23.3 8.3 18.5 Q8.5 12 14 11.6 Q16 8.2 20 8.2 Q24.5 8.2 26.5 12.8 Q31.8 14 31.8 18.5 Q31.5 23.5 27.5 23.5 Z" fill="none" stroke="#111" stroke-width="1.7"/></g><path d="M1641.5 1040 Q1653 1029 1664.5 1040" fill="none" stroke="#c6c9cf" stroke-width="1.5"/><path d="M1645 1043.5 Q1653 1036 1661 1043.5" fill="none" stroke="#c6c9cf" stroke-width="1.5"/><path d="M1648.5 1047 Q1653 1043 1657.5 1047" fill="none" stroke="#222" stroke-width="1.6"/><circle cx="1653" cy="1050" r="1.8" fill="#222"/><path d="M1677.5 1040 H1681.5 L1687 1035.5 V1051.5 L1681.5 1047 H1677.5 Z" fill="none" stroke="#222" stroke-width="1.5" stroke-linejoin="round"/><path d="M1690.5 1040 Q1693 1043.5 1690.5 1047" fill="none" stroke="#222" stroke-width="1.5"/><path d="M1694 1037 Q1698.5 1043.5 1694 1050" fill="none" stroke="#222" stroke-width="1.5"/><path d="M1697.5 1034.5 Q1704 1043.5 1697.5 1052.5" fill="none" stroke="#c6c9cf" stroke-width="1.3"/><rect x="1713.5" y="1037.5" width="20" height="13" rx="2.5" fill="none" stroke="#222" stroke-width="1.5"/><rect x="1716" y="1040" width="15" height="8" rx="0.8" fill="#111"/><rect x="1734.5" y="1041.5" width="2.5" height="5" rx="0.8" fill="#222"/><g transform="translate(1860 1026)" fill="none" stroke="#1a1a1a" stroke-width="1.45" stroke-linejoin="round"><path d="M20.5 8.3 Q17 8 14 9.8 Q11 12 11 16 V20 Q11 21 10 22 L8.8 23.3 Q8.3 24.3 9.5 24.3 H26.5 Q27.7 24.3 27.2 23.3 L26 22 Q24.7 21 24.7 20 V16.8"/><path d="M15 24.6 Q15.5 27.5 18 27.5 Q20.5 27.5 21 24.6"/><path d="M16.2 14 H20.8 L16.2 18.8 H20.8"/><path d="M23 8 H28.2 L23 14.3 H28.2"/></g></svg>
<div class="t" style="left:655px;top:1035px;font-size:20px;color:#5a5d63;letter-spacing:-0.4px">Search</div>
<div class="a" style="left:1740px;top:1024px;width:115px;text-align:right;font-size:17.5px;line-height:1;color:#1a1a1a;white-space:nowrap">17:15</div>
<div class="a" style="left:1740px;top:1048px;width:115px;text-align:right;font-size:17.8px;line-height:1;color:#1a1a1a;white-space:nowrap">10/09/2023</div>
</body></html>
